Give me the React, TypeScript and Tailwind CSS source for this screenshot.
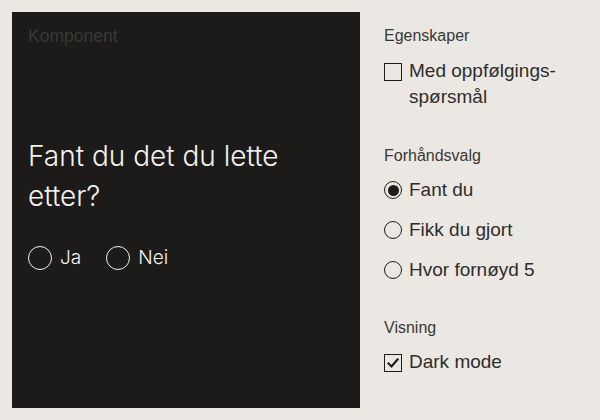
import { ReactNode } from "react";

const sans = "font-['Liberation_Sans',Arial,sans-serif]";

interface IOption {
  label: ReactNode;
  checked?: boolean;
}

const Checkbox = ({ label, checked }: IOption) => (
  <div className="flex items-start gap-[7px]">
    <span className="mt-[5px] w-[18px] h-[18px] shrink-0 border-[1.5px] border-[#1f1d1b] flex items-center justify-center">
      {checked && (
        <svg width="12" height="12" viewBox="0 0 12 12" fill="none">
          <path
            d="M1.5 6.5 L4.5 9.5 L10.5 2.5"
            stroke="#1f1d1b"
            strokeWidth="2.2"
            strokeLinecap="square"
          />
        </svg>
      )}
    </span>
    <span className="text-[19px] leading-[26px] text-[#2f2d2b]">{label}</span>
  </div>
);

const Radio = ({ label, checked }: IOption) => (
  <div className="flex items-center gap-[7px]">
    <span className="w-[18px] h-[18px] shrink-0 rounded-full border-[1.5px] border-[#1f1d1b] flex items-center justify-center">
      {checked && <span className="w-[11px] h-[11px] rounded-full bg-[#1f1d1b]" />}
    </span>
    <span className="text-[19px] leading-[26px] text-[#2f2d2b]">{label}</span>
  </div>
);

const SectionTitle = ({ children }: { children: ReactNode }) => (
  <p className="text-[16px] leading-[20px] text-[#3a3836]">{children}</p>
);

const PreviewRadio = ({ label }: { label: string }) => (
  <div className="flex items-center gap-2">
    <span className="w-6 h-6 rounded-full border-[1.5px] border-[#f4f2ee]" />
    <span className="font-['Inter',sans-serif] font-light text-[19px] leading-[24px] text-[#f4f2ee]">
      {label}
    </span>
  </div>
);

export default function App() {
  const presets = ["Fant du", "Fikk du gjort", "Hvor fornøyd 5"];

  return (
    <div className={`w-[600px] h-[420px] bg-[#ebe8e3] flex p-3 gap-6 ${sans}`}>
      {/* preview */}
      <div className="w-[348px] h-[396px] bg-[#1c1b1a] flex flex-col pt-3 px-4">
        <p className="text-[17.5px] leading-[24px] text-[#3a3836]">Komponent</p>
        <h2 className="mt-[88px] font-['Inter',sans-serif] text-[28px] leading-[40px] text-[#f4f2ee] font-light">
          Fant du det du lette
          <br />
          etter?
        </h2>
        <div className="mt-[30px] flex items-center gap-[25px]">
          <PreviewRadio label="Ja" />
          <PreviewRadio label="Nei" />
        </div>
      </div>

      {/* settings */}
      <div className="flex flex-col pt-[14px]">
        <SectionTitle>Egenskaper</SectionTitle>
        <div className="mt-3">
          <Checkbox
            label={
              <>
                Med oppfølgings-
                <br />
                spørsmål
              </>
            }
          />
        </div>

        <div className="mt-[36px]">
          <SectionTitle>Forhåndsvalg</SectionTitle>
        </div>
        <div className="mt-[11px] flex flex-col gap-[14px]">
          {presets.map((p, i) => (
            <Radio key={p} label={p} checked={i === 0} />
          ))}
        </div>

        <div className="mt-[35px]">
          <SectionTitle>Visning</SectionTitle>
        </div>
        <div className="mt-[11px]">
          <Checkbox label="Dark mode" checked />
        </div>
      </div>
    </div>
  );
}
